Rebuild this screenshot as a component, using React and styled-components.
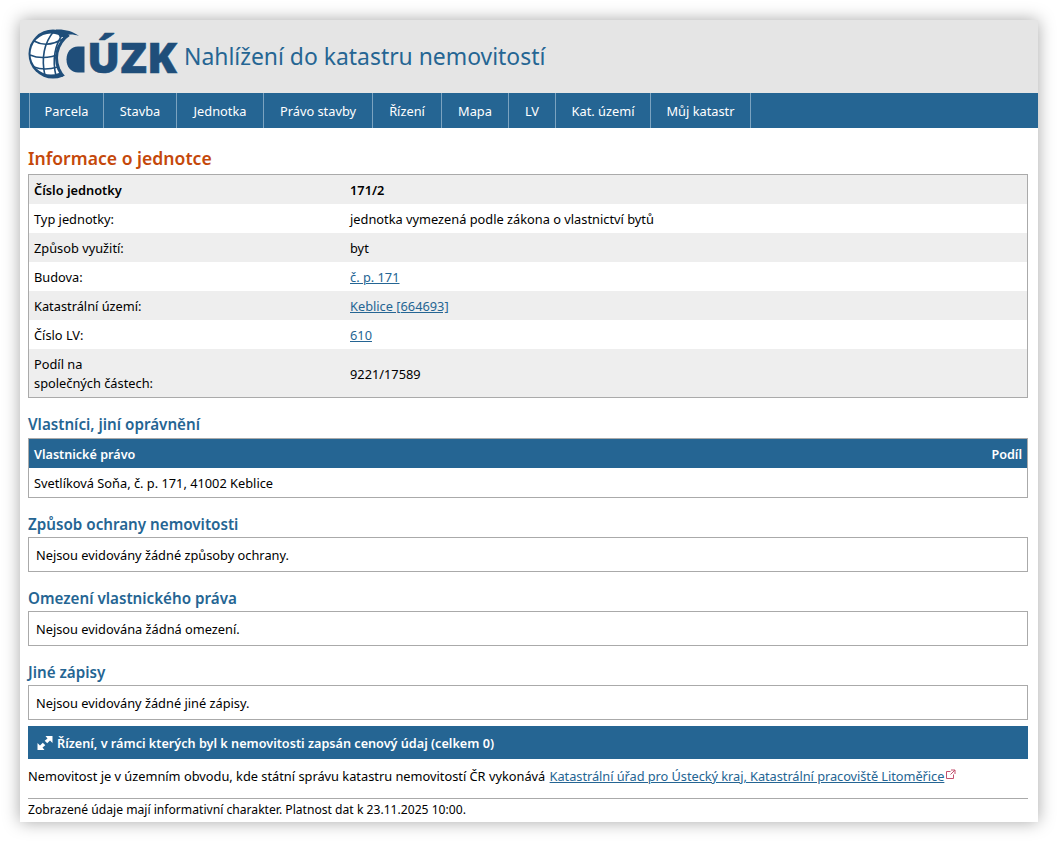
import React from "react";
import styled, { createGlobalStyle } from "styled-components";

const GlobalStyle = createGlobalStyle`
    html, body {
        margin: 0;
        padding: 0;
        background-color: #ffffff;
    }
    body {
        font-family: "Noto Sans", "Open Sans", "Liberation Sans", sans-serif;
        font-size: 12.8px;
        color: #000000;
    }
`;

const Page = styled.div`
    width: 1018px;
    height: 802px;
    margin: 20px;
    background-color: #ffffff;
    box-shadow: 0 0 16px rgba(0, 0, 0, 0.35);
    overflow: hidden;
`;

const Header = styled.header`
    height: 73px;
    display: flex;
    align-items: center;
    padding-left: 8px;
    background-color: #e5e5e5;
`;

const Logo = styled.svg`
    display: block;
    width: 150px;
    height: 64px;
    flex: none;
`;

const SiteTitle = styled.h1`
    margin: 0 0 0 6px;
    font-size: 22.9px;
    font-weight: 400;
    color: #256593;
`;

const Nav = styled.nav`
    height: 35px;
    display: flex;
    padding-left: 9px;
    background-color: #256593;
`;

const NavItem = styled.a`
    display: flex;
    align-items: center;
    justify-content: center;
    width: ${(p) => p.$width}px;
    border-left: 1px solid #7ba3c0;
    color: #ffffff;
    box-sizing: border-box;
    &:last-child {
        border-right: 1px solid #7ba3c0;
    }
`;

const Content = styled.main`
    padding: 0 10px 0 8px;
`;

const PageTitle = styled.h2`
    margin: 20px 0 5px;
    font-size: 17.6px;
    line-height: 21px;
    font-weight: 600;
    color: #c5480a;
`;

const SectionTitle = styled.h3`
    margin: 16px 0 ${(p) => p.$gap || 4}px;
    font-size: 15.2px;
    line-height: 20px;
    font-weight: 600;
    color: #256593;
`;

const Table = styled.table`
    width: 100%;
    border-collapse: separate;
    border-spacing: 0;
    border: 1px solid #aaaaaa;
    box-sizing: border-box;
`;

const Row = styled.tr`
    background-color: ${(p) => (p.$shaded ? "#eeeeee" : "#ffffff")};
`;

const Cell = styled.td`
    padding: 6px 5px 4px;
    height: 19px;
    line-height: 19px;
    font-weight: ${(p) => (p.$bold ? 600 : 400)};
    width: ${(p) => (p.$label ? "306px" : "auto")};
`;

const HeadRow = styled.tr`
    background-color: #256593;
    color: #ffffff;
`;

const HeadCell = styled.th`
    padding: 6px 5px 4px;
    height: 19px;
    line-height: 19px;
    font-size: 12.6px;
    font-weight: 600;
    text-align: ${(p) => (p.$right ? "right" : "left")};
`;

const TextLink = styled.a`
    color: #256593;
    text-decoration: underline;
`;

const Notice = styled.div`
    height: 33px;
    display: flex;
    align-items: center;
    padding-left: 7px;
    border: 1px solid #aaaaaa;
`;

const Expander = styled.div`
    height: 33px;
    margin-top: 6px;
    display: flex;
    align-items: center;
    gap: 4px;
    padding-left: 9px;
    background-color: #256593;
    color: #ffffff;
    font-size: 12.65px;
    font-weight: 600;
`;

const OfficeLine = styled.p`
    margin: 7px 0 0;
    line-height: 20px;
    display: flex;
    align-items: center;
`;

const OfficeLink = styled(TextLink)`
    margin-left: 1px;
    letter-spacing: -0.004em;
`;

const ExternalIcon = styled.svg`
    width: 10px;
    height: 10px;
    margin: 0 0 4px 2px;
    flex: none;
`;

const Footer = styled.footer`
    margin-top: 12px;
    padding-top: 1px;
    border-top: 1px solid #aaaaaa;
    font-size: 12.13px;
    line-height: 19px;
`;

const navItems = [
    ["Parcela", 74],
    ["Stavba", 73],
    ["Jednotka", 87],
    ["Právo stavby", 109],
    ["Řízení", 69],
    ["Mapa", 67],
    ["LV", 47],
    ["Kat. území", 95],
    ["Můj katastr", 101],
];

const unitRows = [
    ["Typ jednotky:", "jednotka vymezená podle zákona o vlastnictví bytů"],
    ["Způsob využití:", "byt"],
    ["Budova:", <TextLink key="b">č. p. 171</TextLink>],
    ["Katastrální území:", <TextLink key="k">Keblice [664693]</TextLink>],
    ["Číslo LV:", <TextLink key="l">610</TextLink>],
];

const logoBlue = "#1f4e7a";

const CuzkLogo = () => (
    <Logo viewBox="0 -4 150 64">
        <defs>
            <clipPath id="globe">
                <circle cx="25" cy="25" r="24.5" />
            </clipPath>
        </defs>
        <circle cx="25" cy="25" r="24.5" fill={logoBlue} />
        <circle cx="23" cy="25" r="20.5" fill="#ffffff" />
        {/* meridians and parallels */}
        <g fill="none" stroke={logoBlue} strokeWidth="1.6">
            <path d="M26 2 Q11 20 17 47" />
            <path d="M36 3 Q22 22 28 47" />
            <path d="M6 12 Q20 20 38 8" />
            <path d="M2 26 Q16 32 34 24" />
            <path d="M6 38 Q16 42 30 38" />
        </g>
        <g clipPath="url(#globe)">
            <circle cx="57" cy="29" r="30" fill={logoBlue} />
        </g>
        <circle cx="57" cy="29" r="27" fill="#e5e5e5" />
        {/* tail of the C above the opening */}
        <path d="M28 0.5 C36 0 45 2 51 7 C44 4.5 38 5 32 9 Z" fill={logoBlue} />
        <path
            d="M56.5 17.5 V43.5 H50 C43 43.5 38.5 38 38.5 30.5 C38.5 23 43 17.5 50 17.5 Z"
            fill={logoBlue}
        />
        <text
            x="59"
            y="43.5"
            fontFamily="'Open Sans', sans-serif"
            fontSize="43"
            fontWeight="800"
            fill={logoBlue}
            stroke={logoBlue}
            strokeWidth="0.5"
            textLength="90"
            lengthAdjust="spacingAndGlyphs"
        >
            ÚZK
        </text>
    </Logo>
);

const App = () => (
    <>
        <GlobalStyle />
        <Page>
            <Header>
                <CuzkLogo />
                <SiteTitle>Nahlížení do katastru nemovitostí</SiteTitle>
            </Header>
            <Nav>
                {navItems.map(([label, width]) => (
                    <NavItem key={label} $width={width}>
                        {label}
                    </NavItem>
                ))}
            </Nav>
            <Content>
                <PageTitle>Informace o jednotce</PageTitle>
                <Table>
                    <tbody>
                        <Row $shaded>
                            <Cell $label $bold>
                                Číslo jednotky
                            </Cell>
                            <Cell $bold>171/2</Cell>
                        </Row>
                        {unitRows.map(([label, value], index) => (
                            <Row key={label} $shaded={index % 2 === 1}>
                                <Cell $label>{label}</Cell>
                                <Cell>{value}</Cell>
                            </Row>
                        ))}
                        <Row $shaded>
                            <Cell $label>
                                Podíl na
                                <br />
                                společných částech:
                            </Cell>
                            <Cell>9221/17589</Cell>
                        </Row>
                    </tbody>
                </Table>

                <SectionTitle>Vlastníci, jiní oprávnění</SectionTitle>
                <Table>
                    <thead>
                        <HeadRow>
                            <HeadCell>Vlastnické právo</HeadCell>
                            <HeadCell $right>Podíl</HeadCell>
                        </HeadRow>
                    </thead>
                    <tbody>
                        <Row>
                            <Cell colSpan={2}>
                                Svetlíková Soňa, č. p. 171, 41002 Keblice
                            </Cell>
                        </Row>
                    </tbody>
                </Table>

                <SectionTitle $gap={3}>Způsob ochrany nemovitosti</SectionTitle>
                <Notice>Nejsou evidovány žádné způsoby ochrany.</Notice>

                <SectionTitle $gap={3}>Omezení vlastnického práva</SectionTitle>
                <Notice>Nejsou evidována žádná omezení.</Notice>

                <SectionTitle $gap={3}>Jiné zápisy</SectionTitle>
                <Notice>Nejsou evidovány žádné jiné zápisy.</Notice>

                <Expander>
                    <svg width="16" height="16" viewBox="0 0 16 16">
                        <path
                            d="M8.5 1 H15.5 V8 L13 5.5 L10.2 8.3 L7.7 5.8 L10.5 3.5 Z M7.5 15 H0.5 V8 L3 10.5 L5.8 7.7 L8.3 10.2 L5.5 12.5 Z"
                            fill="#ffffff"
                        />
                    </svg>
                    Řízení, v rámci kterých byl k nemovitosti zapsán cenový údaj
                    (celkem 0)
                </Expander>

                <OfficeLine>
                    Nemovitost je v územním obvodu, kde státní správu katastru
                    nemovitostí ČR vykonává&nbsp;
                    <OfficeLink>
                        Katastrální úřad pro Ústecký kraj, Katastrální pracoviště
                        Litoměřice
                    </OfficeLink>
                    <ExternalIcon viewBox="0 0 10 10">
                        <path
                            d="M7.5 5.5 V9.5 H0.5 V2.5 H4.5 M5 1 H9 V5 M9 1 L4.5 5.5"
                            fill="none"
                            stroke="#c4506f"
                            strokeWidth="1"
                        />
                    </ExternalIcon>
                </OfficeLine>

                <Footer>
                    Zobrazené údaje mají informativní charakter. Platnost dat k
                    23.11.2025 10:00.
                </Footer>
            </Content>
        </Page>
    </>
);

export default App;
